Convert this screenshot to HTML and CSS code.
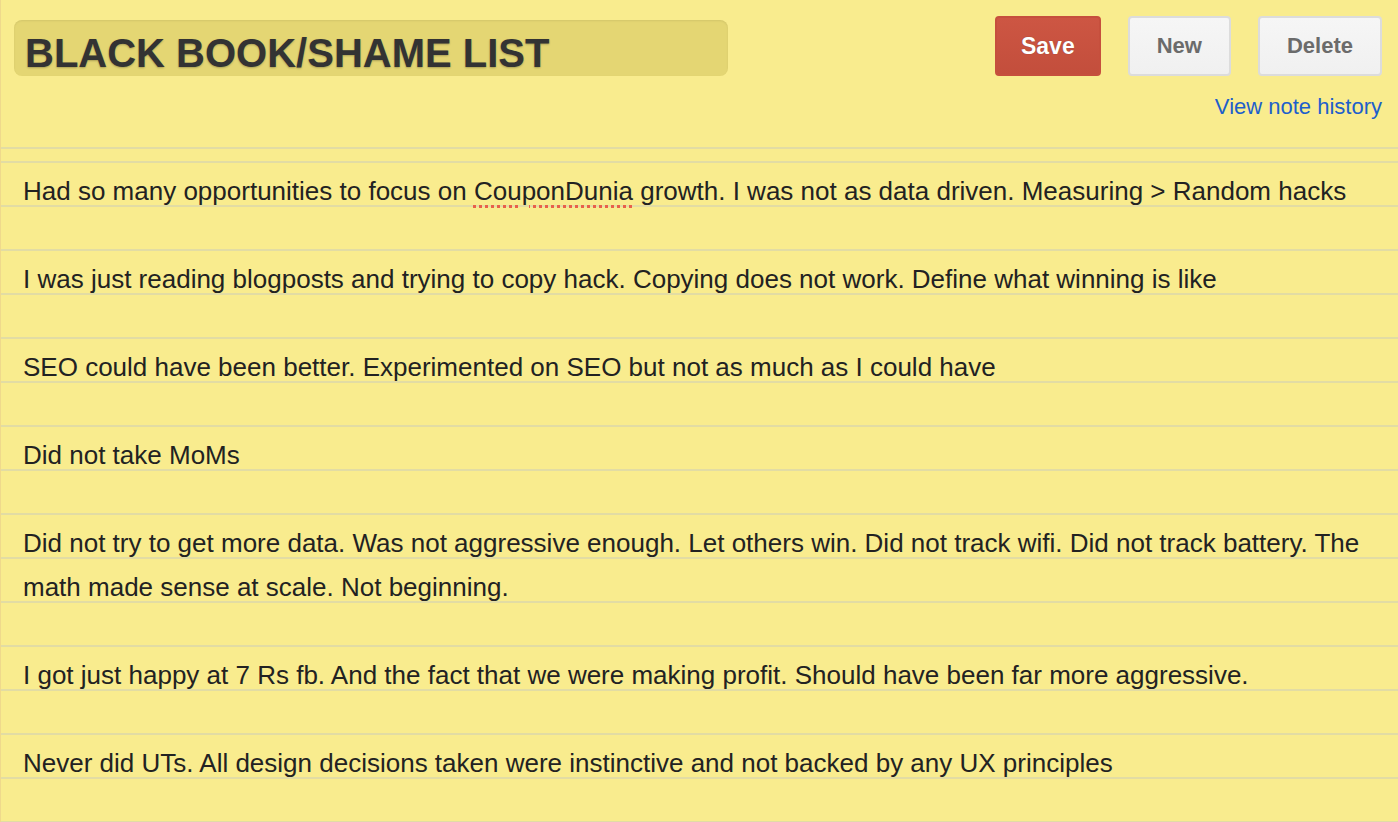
FILE: index.html
```html
<!DOCTYPE html>
<html lang="en">
<head>
    <meta charset="UTF-8">
    <title>Black Book/Shame List</title>
    <link rel="stylesheet" href="styles.css">
</head>
<body>
    <header class="note-header">
        <h1 class="note-title">BLACK BOOK/SHAME LIST</h1>
        <div class="note-actions">
            <div class="buttons">
                <button class="btn btn-save">Save</button>
                <button class="btn">New</button>
                <button class="btn">Delete</button>
            </div>
            <a class="history-link" href="#">View note history</a>
        </div>
    </header>

    <section class="note-body">
        <p>Had so many opportunities to focus on <span class="misspelt">CouponDunia</span> growth. I was not as data driven. Measuring &gt; Random hacks</p>
        <p>I was just reading blogposts and trying to copy hack. Copying does not work. Define what winning is like</p>
        <p>SEO could have been better. Experimented on SEO but not as much as I could have</p>
        <p>Did not take MoMs</p>
        <p>Did not try to get more data. Was not aggressive enough. Let others win. Did not track wifi. Did not track battery. The math made sense at scale. Not beginning.</p>
        <p>I got just happy at 7 Rs fb. And the fact that we were making profit. Should have been far more aggressive.</p>
        <p class="last">Never did UTs. All design decisions taken were instinctive and not backed by any UX principles</p>
    </section>
</body>
</html>
```

FILE: styles.css
```css
body {
    margin: 0;
    background: #f9ec8e;
    border-left: 1px solid #efd98c;
    font-family: 'Liberation Sans', Arial, sans-serif;
    color: #222;
    height: 822px;
    overflow: hidden;
}

.note-header {
    display: flex;
    justify-content: space-between;
    align-items: flex-start;
    padding: 16px 16px 28px 13px;
}

.note-title {
    margin: 4px 0 0;
    width: 714px;
    height: 56px;
    box-sizing: border-box;
    padding: 10px 0 0 11px;
    background: #e4d673;
    border-radius: 8px;
    box-shadow: inset 0 1px 2px rgba(0, 0, 0, 0.08);
    font-size: 40px;
    line-height: 46px;
    font-weight: bold;
    color: #333;
    text-shadow: 0 1px 2px rgba(0, 0, 0, 0.25);
}

.note-actions {
    display: flex;
    flex-direction: column;
    align-items: flex-end;
}

.buttons {
    display: flex;
    gap: 27px;
}

.btn {
    height: 60px;
    padding: 0 27px;
    font-family: 'Liberation Sans', Arial, sans-serif;
    font-size: 22px;
    font-weight: bold;
    color: #6b6b6b;
    background: linear-gradient(to bottom, #f6f6f6, #f0f0f0);
    border: 2px solid #dcdcdc;
    border-radius: 4px;
}

.btn-save {
    padding: 0 24px;
    font-size: 23px;
    color: #fff;
    background: linear-gradient(to bottom, #cd5643, #c34e3c);
    border-color: #c64f3d;
    text-shadow: 0 0 1px rgba(0, 0, 0, 0.35);
}

.history-link {
    margin-top: 18px;
    font-size: 22px;
    line-height: 25px;
    color: #1d5fcb;
    text-decoration: none;
}

.note-body {
    border-top: 2px solid #e2dca4;
    padding: 20px 20px 0 22px;
    background-image: linear-gradient(to bottom, transparent 12px, #e2dca4 12px, #e2dca4 14px, transparent 14px);
    background-size: 100% 44px;
    background-repeat: repeat-y;
    height: 653px;
}

.note-body p {
    margin: 0 0 44px;
    font-size: 26px;
    line-height: 44px;
}

.note-body p.last {
    margin-bottom: 0;
}

.misspelt {
    text-decoration: underline dotted #e8604a;
    text-decoration-thickness: 3px;
    text-underline-offset: 5px;
}
```
